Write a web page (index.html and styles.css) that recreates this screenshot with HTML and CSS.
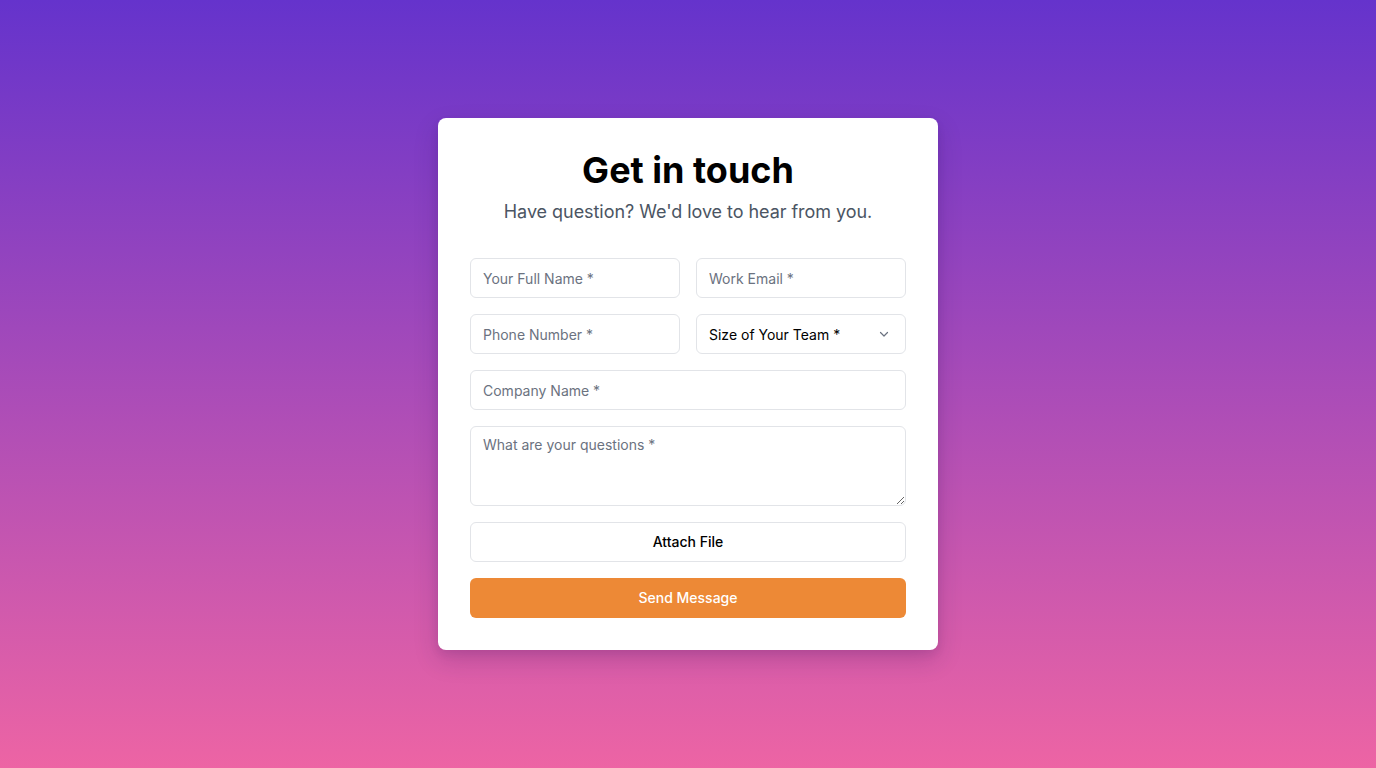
FILE: index.html
```html
<!DOCTYPE html>
<html lang="en">
<head>
<meta charset="utf-8">
<title>Get in touch</title>
<link rel="stylesheet" href="styles.css">
</head>
<body>
<main class="page">
  <section class="card">
    <h1 class="title">Get in touch</h1>
    <p class="subtitle">Have question? We'd love to hear from you.</p>
    <form class="form">
      <div class="row">
        <input class="field" type="text" placeholder="Your Full Name *">
        <input class="field" type="email" placeholder="Work Email *">
      </div>
      <div class="row">
        <input class="field" type="tel" placeholder="Phone Number *">
        <div class="select">
          <span>Size of Your Team *</span>
          <svg class="chev" width="12" height="12" viewBox="0 0 12 12" aria-hidden="true"><path d="M2.5 4.5 6 8l3.5-3.5" fill="none" stroke="#6b7280" stroke-width="1.2" stroke-linecap="round" stroke-linejoin="round"/></svg>
        </div>
      </div>
      <input class="field" type="text" placeholder="Company Name *">
      <textarea class="field area" placeholder="What are your questions *"></textarea>
      <button class="btn attach" type="button">Attach File</button>
      <button class="btn send" type="button">Send Message</button>
    </form>
  </section>
</main>
</body>
</html>
```

FILE: styles.css
```css
* { box-sizing: border-box; }
html, body { margin: 0; height: 100%; }
body {
  font-family: Inter, "Noto Sans", sans-serif;
  background: linear-gradient(to bottom, #6533cc 0%, #ed64a4 100%);
  min-height: 768px;
}
.page {
  height: 768px;
  display: flex;
  align-items: flex-start;
  justify-content: center;
  padding-top: 118px;
}
.card {
  width: 500px;
  background: #fff;
  border-radius: 8px;
  padding: 32px;
  box-shadow: 0 10px 25px rgba(40, 10, 80, 0.18), 0 4px 8px rgba(40, 10, 80, 0.08);
}
.title {
  margin: 0;
  text-align: center;
  font-size: 36px;
  line-height: 40px;
  font-weight: 700;
  color: #000;
}
.subtitle {
  margin: 8px 0 32px;
  text-align: center;
  font-size: 18px;
  line-height: 28px;
  letter-spacing: -0.05px;
  color: #4b5563;
}
.form {
  display: flex;
  flex-direction: column;
  gap: 16px;
}
.row {
  display: grid;
  grid-template-columns: 1fr 1fr;
  gap: 16px;
}
.field {
  display: block;
  width: 100%;
  height: 40px;
  border: 1px solid #e2e4e8;
  border-radius: 6px;
  padding: 0 12px;
  font-family: inherit;
  font-size: 14px;
  color: #111;
  background: #fff;
  outline: none;
}
.field::placeholder { color: #6b7280; }
.area {
  height: 80px;
  padding: 8px 12px;
  resize: vertical;
  line-height: 20px;
}
.select {
  height: 40px;
  border: 1px solid #e2e4e8;
  border-radius: 6px;
  padding: 0 15px 0 12px;
  display: flex;
  align-items: center;
  justify-content: space-between;
  font-size: 14px;
  color: #000;
}
.btn {
  height: 40px;
  width: 100%;
  border-radius: 6px;
  padding: 0 0 2px;
  font-family: inherit;
  font-size: 14px;
  font-weight: 500;
  cursor: pointer;
}
.attach {
  background: #fff;
  border: 1px solid #e2e4e8;
  color: #000;
}
.send {
  background: #ed8936;
  border: none;
  color: #fff;
  font-weight: 500;
}
```
